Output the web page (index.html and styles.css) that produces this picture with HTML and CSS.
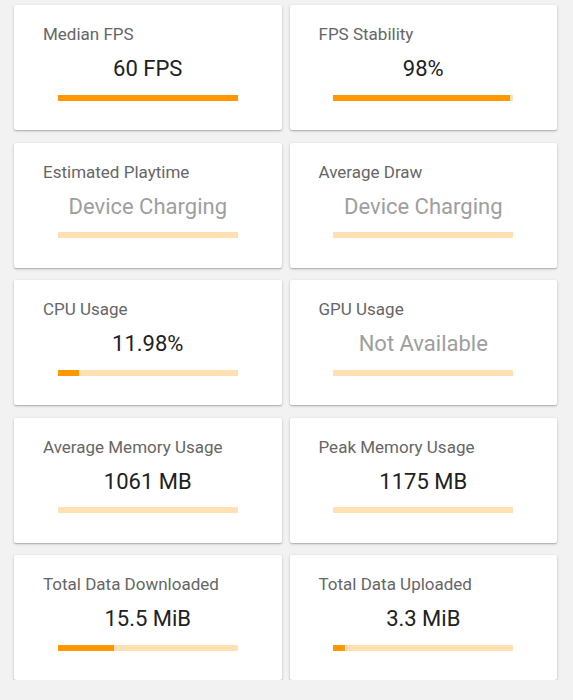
FILE: index.html
```html
<!DOCTYPE html>
<html>
<head>
<meta charset="utf-8">
<link rel="stylesheet" href="styles.css">
</head>
<body>
<div class="grid">
  <div class="card"><div class="title">Median FPS</div><div class="value">60 FPS</div><div class="bar"><div class="fill" style="width:100%"></div></div></div>
  <div class="card"><div class="title">FPS Stability</div><div class="value">98%</div><div class="bar"><div class="fill" style="width:98%"></div></div></div>
  <div class="card"><div class="title">Estimated Playtime</div><div class="value muted">Device Charging</div><div class="bar"><div class="fill" style="width:0%"></div></div></div>
  <div class="card"><div class="title">Average Draw</div><div class="value muted">Device Charging</div><div class="bar"><div class="fill" style="width:0%"></div></div></div>
  <div class="card"><div class="title">CPU Usage</div><div class="value">11.98%</div><div class="bar"><div class="fill" style="width:12%"></div></div></div>
  <div class="card"><div class="title">GPU Usage</div><div class="value muted">Not Available</div><div class="bar"><div class="fill" style="width:0%"></div></div></div>
  <div class="card"><div class="title">Average Memory Usage</div><div class="value">1061 MB</div><div class="bar"><div class="fill" style="width:0%"></div></div></div>
  <div class="card"><div class="title">Peak Memory Usage</div><div class="value">1175 MB</div><div class="bar"><div class="fill" style="width:0%"></div></div></div>
  <div class="card"><div class="title">Total Data Downloaded</div><div class="value">15.5 MiB</div><div class="bar"><div class="fill" style="width:31%"></div></div></div>
  <div class="card"><div class="title">Total Data Uploaded</div><div class="value">3.3 MiB</div><div class="bar"><div class="fill" style="width:6.6%"></div></div></div>
</div>
</body>
</html>
```
FILE: styles.css
```css
html, body {
  margin: 0;
  background: #f2f2f2;
}
body {
  font-family: Roboto, "Liberation Sans", sans-serif;
  padding: 5px 16px 0 14px;
}
.grid {
  display: grid;
  grid-template-columns: 1fr 1fr;
  column-gap: 8px;
  row-gap: 12.5px;
}
.card {
  height: 125px;
  box-sizing: border-box;
  background: #fff;
  border-radius: 2px;
  box-shadow: 0 1px 3px rgba(0,0,0,0.22), 0 1px 1px rgba(0,0,0,0.12);
  padding-top: 19.3px;
  display: flex;
  flex-direction: column;
  align-items: center;
}
.title {
  align-self: stretch;
  padding-left: 29px;
  font-size: 17px;
  line-height: 20px;
  color: #666;
}
.value {
  margin-top: 11px;
  font-size: 22px;
  line-height: 28px;
  color: #212121;
}
.value.muted {
  color: #9e9e9e;
}
.bar {
  margin-top: 11.5px;
  width: 180px;
  height: 6px;
  background: #ffe0b2;
}
.fill {
  height: 100%;
  background: #ff9800;
}
```
